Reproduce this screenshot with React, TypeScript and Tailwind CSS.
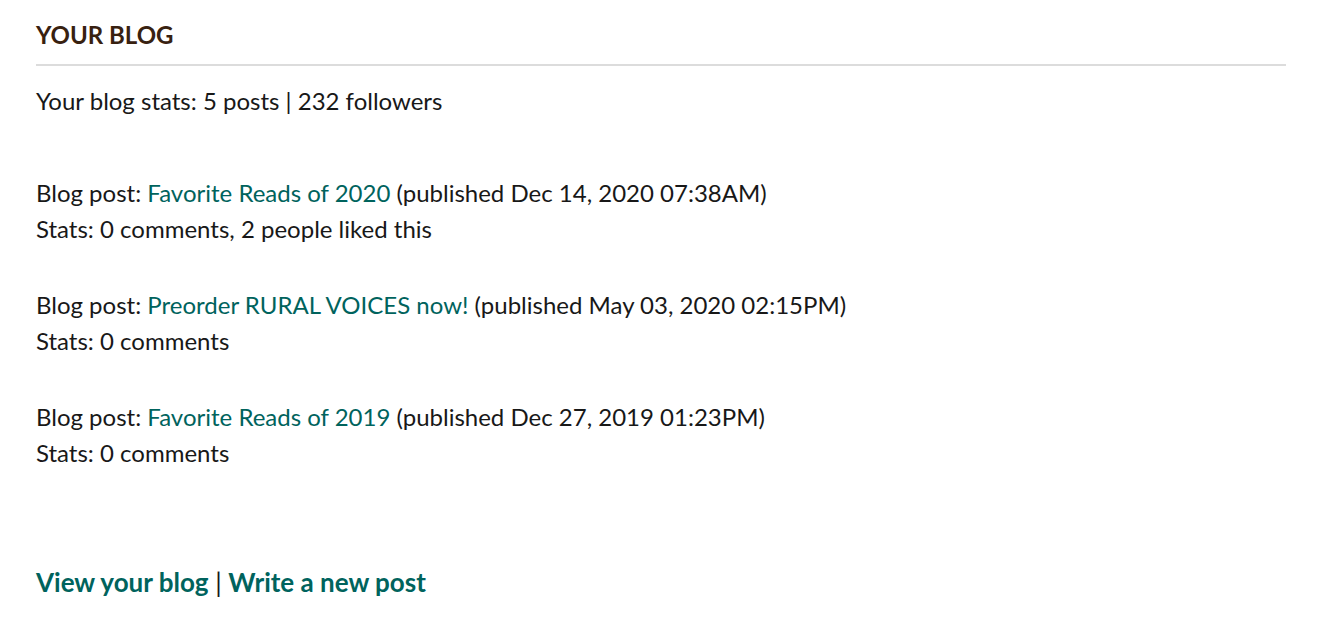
const posts = [
  { title: "Favorite Reads of 2020", date: "Dec 14, 2020 07:38AM", stats: "0 comments, 2 people liked this" },
  { title: "Preorder RURAL VOICES now!", date: "May 03, 2020 02:15PM", stats: "0 comments" },
  { title: "Favorite Reads of 2019", date: "Dec 27, 2019 01:23PM", stats: "0 comments" },
];

export default function App() {
  return (
    <div className="min-h-[620px] w-full bg-white font-['Lato',sans-serif] text-[#181818]">
      <div className="mx-[36px] w-[1250px] pt-[20px]">
        <h2 className="text-[24px] font-bold leading-[30px] text-[#382110]">YOUR BLOG</h2>
        <div className="mt-[14px] h-[2px] bg-[#dcdcdc]" />
        <p className="mt-[17px] text-[24px] leading-[36px]">Your blog stats: 5 posts | 232 followers</p>

        <div className="mt-[56px] flex flex-col gap-[40px]">
          {posts.map(post => (
            <div key={post.title} className="text-[24px] leading-[36px]">
              <p>
                Blog post: <a href="#" className="text-[#00635d]">{post.title}</a> (published {post.date})
              </p>
              <p>Stats: {post.stats}</p>
            </div>
          ))}
        </div>

        <p className="mt-[93px] text-[26px] leading-[36px]">
          <a href="#" className="font-bold text-[#00635d]">View your blog</a> |{" "}
          <a href="#" className="font-bold text-[#00635d]">Write a new post</a>
        </p>
      </div>
    </div>
  );
}
